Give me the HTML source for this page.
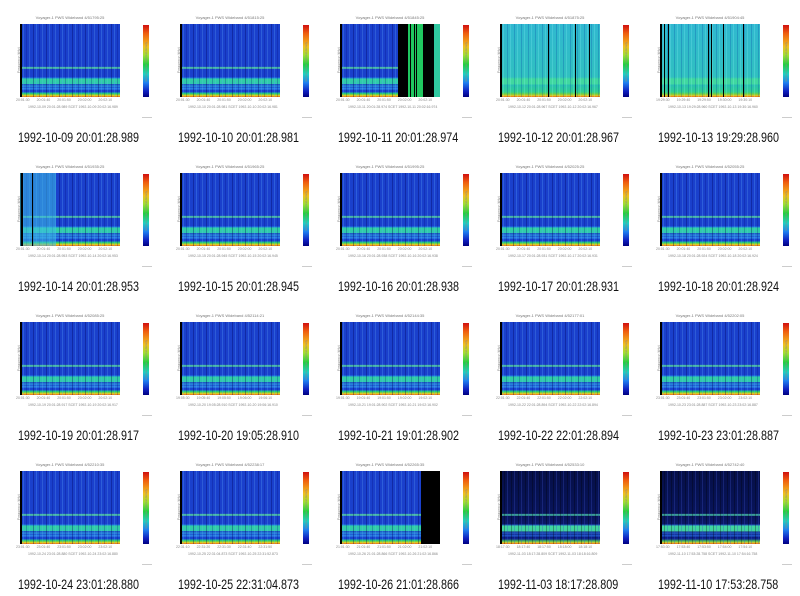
<!DOCTYPE html>
<html><head><meta charset="utf-8"><style>
*{margin:0;padding:0;box-sizing:border-box}
body{width:800px;height:596px;background:#fff;position:relative;overflow:hidden;font-family:"Liberation Sans",sans-serif}
.c{position:absolute;width:160px;height:149px}
.t{position:absolute;left:20px;width:100px;top:15px;text-align:center;font-size:4px;color:#777;white-space:nowrap}
.p{position:absolute;left:20px;top:24px;width:100px;height:73px;overflow:hidden;
background:
repeating-linear-gradient(90deg,rgba(0,0,90,.35) 0 1px,transparent 1px 3px,rgba(90,170,255,.28) 3px 4px,transparent 4px 6px,rgba(0,10,120,.25) 6px 7px,transparent 7px 9px,rgba(120,200,255,.2) 9px 10px,transparent 10px 13px),
linear-gradient(to top,#e05010 0,#f0c020 1px,#c0d020 2px,#30d060 3px,#20c090 4px,#1844d0 5px,#1844d0 7px,#3090e8 8px,#1a50d0 10px,#30b0e0 11px,#1838c8 12px,#1838c8 12.5px,#30c8b0 13px,#30d0a0 18px,#2080e0 19px,#1a40cc 20px,#1a40cc 28px,#50c8a0 28.5px,#50c8a0 29.5px,#1a40cc 30.5px,#1a40cc 100%);}
.p:before{content:"";position:absolute;left:0;top:0;width:1.5px;height:100%;background:#000}
.cy{background:
repeating-linear-gradient(90deg,rgba(0,60,160,.25) 0 1px,transparent 1px 3px,rgba(160,255,255,.2) 3px 4px,transparent 4px 7px),
linear-gradient(to top,#e05010 0,#f0c020 1px,#70d040 3px,#30d090 5px,#28c0b0 12px,#40d8a0 13px,#40d8a0 18px,#30c0c0 20px,#30b8d0 100%)}
.dk{background:
repeating-linear-gradient(90deg,rgba(60,80,200,.3) 0 1px,transparent 1px 4px,rgba(0,0,0,.3) 4px 5px,transparent 5px 7px),
linear-gradient(to top,#e05010 0,#f0c020 1px,#40c060 3px,#102890 5px,#0a1a80 7px,#2060d0 8px,#102a90 10px,#2a70d8 11px,#0c1e80 12px,#40d0a0 13px,#40d8a0 18px,#2060c0 19px,#0a1868 20px,#08145a 28px,#40b0a0 28.5px,#40b0a0 29.5px,#08145a 30.5px,#050f48 100%)}
.b{position:absolute;top:0;height:100%;background:#000}
.g{position:absolute;top:0;height:100%;background:#20c860}
.q{position:absolute;top:0;height:100%;background:rgba(60,190,230,.55)}
.ya{position:absolute;left:6px;top:58px;font-size:3.5px;color:#888;transform:rotate(-90deg);white-space:nowrap}
.x1{position:absolute;left:16px;top:98px;width:110px;font-size:3.5px;color:#888;word-spacing:6px;white-space:nowrap}
.x2{position:absolute;left:28px;top:105px;width:110px;font-size:3.5px;color:#888;white-space:nowrap}
.cb{position:absolute;left:143px;top:25px;width:6px;height:72px;background:linear-gradient(to bottom,#d01010,#f06010 12%,#f0c020 30%,#a0e030 42%,#20d040 55%,#20d0c0 68%,#2080f0 80%,#1020c0 92%,#000080)}
.ca{position:absolute;left:126px;top:60px;font-size:3px;color:#888;transform:rotate(-90deg);white-space:nowrap}
.m{position:absolute;left:142px;top:117px;width:10px;height:1px;background:#ccc}
.cap{position:absolute;left:0;top:129px;width:156px;text-align:center;font-family:"Liberation Sans",sans-serif;font-size:14px;color:#111;white-space:nowrap;transform:scaleX(.77);transform-origin:78px 0}
</style></head><body>

<div class="c" style="left:0;top:0"><div class="t">Voyager-1 PWS Wideband 4/51795:25</div><div class="ya">Frequency (kHz)</div><div class="p"></div><div class="x1">20:01:30 20:01:40 20:01:50 20:02:00 20:02:10</div><div class="x2">1992-10-09 20:01:28.989 SCET 1992-10-09 20:02:16.989</div><div class="cb"></div><div class="ca">relative power spectral density</div><div class="m"></div><div class="cap">1992-10-09 20:01:28.989</div></div>

<div class="c" style="left:160px;top:0"><div class="t">Voyager-1 PWS Wideband 4/51815:25</div><div class="ya">Frequency (kHz)</div><div class="p"></div><div class="x1">20:01:30 20:01:40 20:01:50 20:02:00 20:02:10</div><div class="x2">1992-10-10 20:01:28.981 SCET 1992-10-10 20:02:16.981</div><div class="cb"></div><div class="ca">relative power spectral density</div><div class="m"></div><div class="cap">1992-10-10 20:01:28.981</div></div>

<div class="c" style="left:320px;top:0"><div class="t">Voyager-1 PWS Wideband 4/51845:25</div><div class="ya">Frequency (kHz)</div><div class="p"><div class="b" style="left:58px;width:10px"></div><div class="g" style="left:68px;width:15px"></div><div class="b" style="left:70px;width:1px"></div><div class="b" style="left:74px;width:1px"></div><div class="b" style="left:76px;width:1px"></div><div class="b" style="left:83px;width:11px"></div><div class="g" style="left:94px;width:6px;background:#30c8a0"></div></div><div class="x1">20:01:30 20:01:40 20:01:50 20:02:00 20:02:10</div><div class="x2">1992-10-11 20:01:28.974 SCET 1992-10-11 20:02:16.974</div><div class="cb"></div><div class="ca">relative power spectral density</div><div class="m"></div><div class="cap">1992-10-11 20:01:28.974</div></div>

<div class="c" style="left:480px;top:0"><div class="t">Voyager-1 PWS Wideband 4/51875:25</div><div class="ya">Frequency (kHz)</div><div class="p cy"><div class="b" style="left:0;width:2px"></div><div class="b" style="left:48px;width:1px"></div><div class="b" style="left:75px;width:1px"></div><div class="b" style="left:89px;width:1px"></div></div><div class="x1">20:01:30 20:01:40 20:01:50 20:02:00 20:02:10</div><div class="x2">1992-10-12 20:01:28.967 SCET 1992-10-12 20:02:16.967</div><div class="cb"></div><div class="ca">relative power spectral density</div><div class="m"></div><div class="cap">1992-10-12 20:01:28.967</div></div>

<div class="c" style="left:640px;top:0"><div class="t">Voyager-1 PWS Wideband 4/51904:45</div><div class="ya">Frequency (kHz)</div><div class="p cy"><div class="b" style="left:0;width:2px"></div><div class="b" style="left:4px;width:1px"></div><div class="b" style="left:8px;width:1px"></div><div class="b" style="left:48px;width:1px"></div><div class="b" style="left:51px;width:1px"></div><div class="b" style="left:63px;width:1px"></div><div class="b" style="left:83px;width:1px"></div></div><div class="x1">19:29:30 19:29:40 19:29:50 19:30:00 19:30:10</div><div class="x2">1992-10-13 19:29:28.960 SCET 1992-10-13 19:30:16.960</div><div class="cb"></div><div class="ca">relative power spectral density</div><div class="m"></div><div class="cap">1992-10-13 19:29:28.960</div></div>

<div class="c" style="left:0;top:149px"><div class="t">Voyager-1 PWS Wideband 4/51935:25</div><div class="ya">Frequency (kHz)</div><div class="p"><div class="q" style="left:0;width:36px"></div><div class="b" style="left:1px;width:2px"></div><div class="b" style="left:12px;width:1px"></div></div><div class="x1">20:01:30 20:01:40 20:01:50 20:02:00 20:02:10</div><div class="x2">1992-10-14 20:01:28.953 SCET 1992-10-14 20:02:16.953</div><div class="cb"></div><div class="ca">relative power spectral density</div><div class="m"></div><div class="cap">1992-10-14 20:01:28.953</div></div>

<div class="c" style="left:160px;top:149px"><div class="t">Voyager-1 PWS Wideband 4/51965:25</div><div class="ya">Frequency (kHz)</div><div class="p"></div><div class="x1">20:01:30 20:01:40 20:01:50 20:02:00 20:02:10</div><div class="x2">1992-10-15 20:01:28.945 SCET 1992-10-15 20:02:16.945</div><div class="cb"></div><div class="ca">relative power spectral density</div><div class="m"></div><div class="cap">1992-10-15 20:01:28.945</div></div>

<div class="c" style="left:320px;top:149px"><div class="t">Voyager-1 PWS Wideband 4/51995:25</div><div class="ya">Frequency (kHz)</div><div class="p"></div><div class="x1">20:01:30 20:01:40 20:01:50 20:02:00 20:02:10</div><div class="x2">1992-10-16 20:01:28.938 SCET 1992-10-16 20:02:16.938</div><div class="cb"></div><div class="ca">relative power spectral density</div><div class="m"></div><div class="cap">1992-10-16 20:01:28.938</div></div>

<div class="c" style="left:480px;top:149px"><div class="t">Voyager-1 PWS Wideband 4/52025:25</div><div class="ya">Frequency (kHz)</div><div class="p"></div><div class="x1">20:01:30 20:01:40 20:01:50 20:02:00 20:02:10</div><div class="x2">1992-10-17 20:01:28.931 SCET 1992-10-17 20:02:16.931</div><div class="cb"></div><div class="ca">relative power spectral density</div><div class="m"></div><div class="cap">1992-10-17 20:01:28.931</div></div>

<div class="c" style="left:640px;top:149px"><div class="t">Voyager-1 PWS Wideband 4/52055:25</div><div class="ya">Frequency (kHz)</div><div class="p"></div><div class="x1">20:01:30 20:01:40 20:01:50 20:02:00 20:02:10</div><div class="x2">1992-10-18 20:01:28.924 SCET 1992-10-18 20:02:16.924</div><div class="cb"></div><div class="ca">relative power spectral density</div><div class="m"></div><div class="cap">1992-10-18 20:01:28.924</div></div>

<div class="c" style="left:0;top:298px"><div class="t">Voyager-1 PWS Wideband 4/52085:25</div><div class="ya">Frequency (kHz)</div><div class="p"></div><div class="x1">20:01:30 20:01:40 20:01:50 20:02:00 20:02:10</div><div class="x2">1992-10-19 20:01:28.917 SCET 1992-10-19 20:02:16.917</div><div class="cb"></div><div class="ca">relative power spectral density</div><div class="m"></div><div class="cap">1992-10-19 20:01:28.917</div></div>

<div class="c" style="left:160px;top:298px"><div class="t">Voyager-1 PWS Wideband 4/52114:21</div><div class="ya">Frequency (kHz)</div><div class="p"></div><div class="x1">19:05:30 19:05:40 19:05:50 19:06:00 19:06:10</div><div class="x2">1992-10-20 19:05:28.910 SCET 1992-10-20 19:06:16.910</div><div class="cb"></div><div class="ca">relative power spectral density</div><div class="m"></div><div class="cap">1992-10-20 19:05:28.910</div></div>

<div class="c" style="left:320px;top:298px"><div class="t">Voyager-1 PWS Wideband 4/52144:35</div><div class="ya">Frequency (kHz)</div><div class="p"></div><div class="x1">19:01:30 19:01:40 19:01:50 19:02:00 19:02:10</div><div class="x2">1992-10-21 19:01:28.902 SCET 1992-10-21 19:02:16.902</div><div class="cb"></div><div class="ca">relative power spectral density</div><div class="m"></div><div class="cap">1992-10-21 19:01:28.902</div></div>

<div class="c" style="left:480px;top:298px"><div class="t">Voyager-1 PWS Wideband 4/52177:01</div><div class="ya">Frequency (kHz)</div><div class="p"></div><div class="x1">22:01:30 22:01:40 22:01:50 22:02:00 22:02:10</div><div class="x2">1992-10-22 22:01:28.894 SCET 1992-10-22 22:02:16.894</div><div class="cb"></div><div class="ca">relative power spectral density</div><div class="m"></div><div class="cap">1992-10-22 22:01:28.894</div></div>

<div class="c" style="left:640px;top:298px"><div class="t">Voyager-1 PWS Wideband 4/52202:05</div><div class="ya">Frequency (kHz)</div><div class="p"></div><div class="x1">23:01:30 23:01:40 23:01:50 23:02:00 23:02:10</div><div class="x2">1992-10-23 23:01:28.887 SCET 1992-10-23 23:02:16.887</div><div class="cb"></div><div class="ca">relative power spectral density</div><div class="m"></div><div class="cap">1992-10-23 23:01:28.887</div></div>

<div class="c" style="left:0;top:447px"><div class="t">Voyager-1 PWS Wideband 4/52210:35</div><div class="ya">Frequency (kHz)</div><div class="p"></div><div class="x1">23:01:30 23:01:40 23:01:50 23:02:00 23:02:10</div><div class="x2">1992-10-24 23:01:28.880 SCET 1992-10-24 23:02:16.880</div><div class="cb"></div><div class="ca">relative power spectral density</div><div class="m"></div><div class="cap">1992-10-24 23:01:28.880</div></div>

<div class="c" style="left:160px;top:447px"><div class="t">Voyager-1 PWS Wideband 4/52238:17</div><div class="ya">Frequency (kHz)</div><div class="p"></div><div class="x1">22:31:10 22:31:20 22:31:30 22:31:40 22:31:50</div><div class="x2">1992-10-25 22:31:04.873 SCET 1992-10-25 22:31:52.873</div><div class="cb"></div><div class="ca">relative power spectral density</div><div class="m"></div><div class="cap">1992-10-25 22:31:04.873</div></div>

<div class="c" style="left:320px;top:447px"><div class="t">Voyager-1 PWS Wideband 4/52265:35</div><div class="ya">Frequency (kHz)</div><div class="p"><div class="b" style="left:81px;width:19px"></div></div><div class="x1">21:01:30 21:01:40 21:01:50 21:02:00 21:02:10</div><div class="x2">1992-10-26 21:01:28.866 SCET 1992-10-26 21:02:16.866</div><div class="cb"></div><div class="ca">relative power spectral density</div><div class="m"></div><div class="cap">1992-10-26 21:01:28.866</div></div>

<div class="c" style="left:480px;top:447px"><div class="t">Voyager-1 PWS Wideband 4/52533:10</div><div class="ya">Frequency (kHz)</div><div class="p dk"></div><div class="x1">18:17:30 18:17:40 18:17:50 18:18:00 18:18:10</div><div class="x2">1992-11-03 18:17:28.809 SCET 1992-11-03 18:18:16.809</div><div class="cb"></div><div class="ca">relative power spectral density</div><div class="m"></div><div class="cap">1992-11-03 18:17:28.809</div></div>

<div class="c" style="left:640px;top:447px"><div class="t">Voyager-1 PWS Wideband 4/52742:40</div><div class="ya">Frequency (kHz)</div><div class="p dk"></div><div class="x1">17:53:30 17:53:40 17:53:50 17:54:00 17:54:10</div><div class="x2">1992-11-10 17:53:28.758 SCET 1992-11-10 17:54:16.758</div><div class="cb"></div><div class="ca">relative power spectral density</div><div class="m"></div><div class="cap">1992-11-10 17:53:28.758</div></div>

</body></html>
